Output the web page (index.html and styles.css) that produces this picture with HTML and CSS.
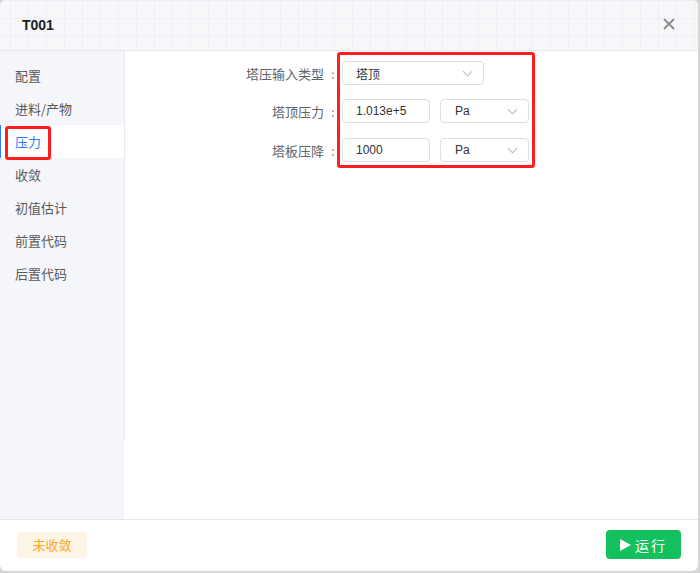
FILE: index.html
```html
<!DOCTYPE html>
<html lang="zh">
<head>
<meta charset="utf-8">
<title>T001</title>
<link rel="stylesheet" href="styles.css">
</head>
<body>
<div class="dialog">
  <div class="header">
    <span class="title">T001</span>
    <span class="close" aria-label="关闭">
      <svg width="12" height="12" viewBox="0 0 12 12"><path d="M1.5 1.5 L10.5 10.5 M10.5 1.5 L1.5 10.5" stroke="#8a8a8a" stroke-width="1.8" stroke-linecap="round"/></svg>
    </span>
  </div>
  <div class="main">
    <div class="sidebar">
      <ul class="menu">
        <li class="item">配置</li>
        <li class="item">进料/产物</li>
        <li class="item active">压力</li>
        <li class="item">收敛</li>
        <li class="item">初值估计</li>
        <li class="item">前置代码</li>
        <li class="item">后置代码</li>
      </ul>
    </div>
    <div class="content">
      <div class="form">
        <div class="row">
          <div class="label">塔压输入类型<span class="colon">:</span></div>
          <div class="select wide"><span>塔顶</span><i class="chev"></i></div>
        </div>
        <div class="row">
          <div class="label">塔顶压力<span class="colon">:</span></div>
          <div class="input">1.013e+5</div>
          <div class="select unit"><span>Pa</span><i class="chev"></i></div>
        </div>
        <div class="row">
          <div class="label">塔板压降<span class="colon">:</span></div>
          <div class="input">1000</div>
          <div class="select unit"><span>Pa</span><i class="chev"></i></div>
        </div>
      </div>
    </div>
  </div>
  <div class="footer">
    <span class="tag">未收敛</span>
    <button class="run"><svg class="tri" width="11" height="12" viewBox="0 0 11 12"><path d="M0 0 L11 6 L0 12 Z" fill="#fff"/></svg>运行</button>
  </div>
  <div class="mark mark-menu"></div>
  <div class="mark mark-form"></div>
</div>
</body>
</html>
```

FILE: styles.css
```css
* { box-sizing: border-box; }
html, body { margin: 0; padding: 0; }
body {
  width: 700px;
  height: 573px;
  background: #d6d6d6;
  font-family: "Liberation Sans", "Noto Sans CJK SC", sans-serif;
  overflow: hidden;
}
.dialog {
  position: relative;
  width: 698px;
  height: 571px;
  background: #fff;
  border-radius: 6px;
  overflow: hidden;
  display: flex;
  flex-direction: column;
}
.header {
  height: 51px;
  flex: none;
  display: flex;
  align-items: center;
  justify-content: space-between;
  padding: 0 23px 0 22px;
  border-bottom: 1px solid #e7e8eb;
  background-color: #f6f7f9;
  background-image:
    linear-gradient(to right, #eef0f3 1px, transparent 1px),
    linear-gradient(to bottom, #eef0f3 1px, transparent 1px);
  background-size: 18px 18px;
  background-position: 10px 0;
}
.title {
  font-size: 14px;
  font-weight: bold;
  color: #1f1f1f;
}
.close {
  display: flex;
  width: 12px;
  height: 12px;
  margin-bottom: 2px;
}
.main {
  flex: 1;
  display: flex;
  min-height: 0;
}
.sidebar {
  width: 124px;
  flex: none;
  background: #f5f6fa;
}
.menu {
  list-style: none;
  margin: 0;
  padding: 8px 0 0;
  height: 389px;
  box-shadow: 1px 0 0 #e9eaef;
}
.item {
  height: 33px;
  line-height: 33px;
  padding-left: 15px;
  font-size: 13px;
  color: #595959;
  font-family: "Noto Sans CJK SC", "Liberation Sans", sans-serif;
}
.item.active {
  background: #fff;
  color: #2f7df6;
  box-shadow: inset 1px 0 0 #2f7df6;
}
.content {
  flex: 1;
  padding-top: 10px;
}
.form {
  display: flex;
  flex-direction: column;
  gap: 14px;
}
.row {
  display: flex;
  align-items: center;
  height: 24px;
}
.row:last-child { margin-top: 1px; }
.label {
  width: 218px;
  text-align: right;
  font-size: 13px;
  color: #606266;
  font-family: "Noto Sans CJK SC", "Liberation Sans", sans-serif;
  display: flex;
  justify-content: flex-end;
  align-items: center;
}
.colon {
  width: 18px;
  text-align: center;
  color: #888;
  font-size: 12px;
}
.select, .input {
  height: 24px;
  border: 1px solid #dcdfe6;
  border-radius: 4px;
  font-size: 12px;
  color: #333;
  display: flex;
  align-items: center;
  padding-left: 13px;
  background: #fff;
}
.input { width: 88px; }
.select {
  justify-content: space-between;
  padding-right: 10px;
}
.select span { font-family: "Liberation Sans", "Noto Sans CJK SC", sans-serif; }
.select.wide { width: 142px; }
.select.unit { width: 89px; margin-left: 10px; padding-left: 14px; }
.chev {
  width: 7px;
  height: 7px;
  border-right: 1px solid #b8bcc4;
  border-bottom: 1px solid #b8bcc4;
  transform: rotate(45deg);
  margin-top: -4px;
  margin-right: 2px;
}
.footer {
  height: 52px;
  flex: none;
  border-top: 1px solid #e6e6e6;
  display: flex;
  align-items: center;
  justify-content: space-between;
  padding: 0 17px 2px 17px;
}
.tag {
  width: 70px;
  height: 26px;
  border-radius: 4px;
  background: #fef4e5;
  color: #f7a62b;
  font-size: 13px;
  display: flex;
  align-items: center;
  justify-content: center;
  font-family: "Noto Sans CJK SC", "Liberation Sans", sans-serif;
}
.run {
  width: 75px;
  height: 29px;
  border: none;
  border-radius: 4px;
  background: #12c05e;
  color: #fff;
  font-size: 14px;
  font-family: "Noto Sans CJK SC", "Liberation Sans", sans-serif;
  display: flex;
  align-items: center;
  justify-content: center;
  gap: 4px;
  padding: 0;
  letter-spacing: 2px;
}
.tri { margin-top: 1px; }
.mark {
  position: absolute;
  border: 3px solid #ff1f1f;
  border-radius: 3px;
  pointer-events: none;
}
.mark-menu { left: 5px; top: 126px; width: 46px; height: 34px; }
.mark-form { left: 337px; top: 52px; width: 198px; height: 116px; }
```
